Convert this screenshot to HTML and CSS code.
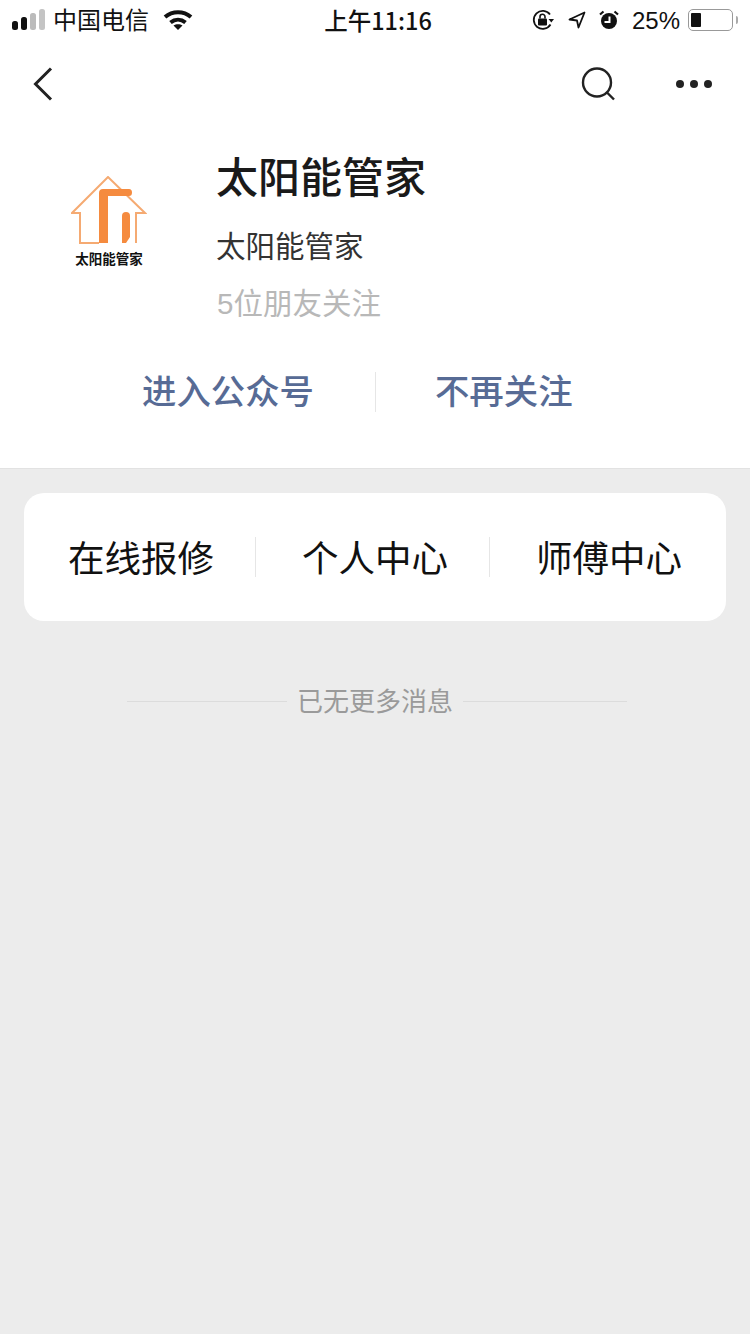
FILE: index.html
```html
<!DOCTYPE html>
<html lang="zh-CN">
<head>
  <meta charset="UTF-8">
  <title>太阳能管家</title>
  <link rel="stylesheet" href="styles.css">
</head>
<body>

  <div class="top">
    <div class="status">
      <div class="status-left">
        <svg class="signal" width="34" height="22" viewBox="0 0 34 22">
          <rect x="0" y="12" width="6" height="9" rx="2.500" fill="#111"/>
          <rect x="9" y="8" width="6" height="13" rx="2.500" fill="#111"/>
          <rect x="18" y="4" width="6" height="17" rx="2.500" fill="#bbb"/>
          <rect x="27" y="0" width="6" height="21" rx="2.500" fill="#c4c4c4"/>
        </svg>
        <span class="carrier">中国电信</span>
        <svg class="wifi" width="30" height="22" viewBox="0 0 30 22">
          <path d="M2 8C9.500 1.500 20.500 1.500 28 8" fill="none" stroke="#111" stroke-width="4"/>
          <path d="M7.500 13.500C12 9.800 18 9.800 22.500 13.500" fill="none" stroke="#111" stroke-width="4"/>
          <path d="M10.500 16.500C13 14.700 17 14.700 19.500 16.500L15 21Z" fill="#111"/>
        </svg>
      </div>
      <div class="clock">上午11:16</div>
      <div class="status-right">
        <svg width="22" height="22" viewBox="0 0 22 22">
          <path d="M18 5.500A9 9 0 1 0 18.500 15.500" fill="none" stroke="#111" stroke-width="1.800"/>
          <path d="M16.500 10h5.500l-2.700 3.500z" fill="#111"/>
          <rect x="6" y="9.500" width="9" height="7" rx="1" fill="#111"/>
          <path d="M8 9.500V7.800a2.500 2.500 0 0 1 5 0v1.700" fill="none" stroke="#111" stroke-width="1.600"/>
        </svg>
        <svg class="gap-loc" width="18" height="18" viewBox="0 0 18 18">
          <path d="M16.500 1.500L1.500 8.500L9 9.500L10.500 16.500Z" fill="none" stroke="#111" stroke-width="1.800" stroke-linejoin="round"/>
        </svg>
        <svg class="gap-alarm" width="20" height="20" viewBox="0 0 20 20">
          <circle cx="10" cy="11" r="8" fill="#111"/>
          <path d="M10.500 6.500V12H5.500" fill="none" stroke="#fff" stroke-width="2"/>
          <path d="M1 4.500L4.500 1.500M19 4.500L15.500 1.500" stroke="#111" stroke-width="2.200"/>
        </svg>
        <span class="percent">25%</span>
        <div class="battery">
          <div class="battery-level"></div>
        </div>
        <div class="battery-tip"></div>
      </div>
    </div>

    <div class="nav">
      <svg width="20" height="34" viewBox="0 0 20 34">
        <path d="M18 1.500L2.500 17L18 32.500" fill="none" stroke="#222" stroke-width="3"/>
      </svg>
      <div class="nav-actions">
        <svg width="34" height="34" viewBox="0 0 34 34">
          <circle cx="16" cy="15.500" r="14" fill="none" stroke="#222" stroke-width="2.400"/>
          <path d="M25.500 25L33 32.500" stroke="#222" stroke-width="2.400"/>
        </svg>
        <div class="dots"><i></i><i></i><i></i></div>
      </div>
    </div>

    <div class="profile">
      <div class="logo">
        <svg width="76" height="70" viewBox="0 0 76 70">
          <path d="M28 67H9V37H1L37 1L74 37H65V67" fill="none" stroke="#f5aa72" stroke-width="2"/>
          <path d="M28 67V17Q28 13 32 13H58Q61 13 61 16.500Q61 20 58 20H37V67Z" fill="#f58b3f"/>
          <path d="M51 67V40Q51 36 55 36Q59 36 59 40V61L55 67Z" fill="#f58b3f"/>
        </svg>
        <span class="logo-text">太阳能管家</span>
      </div>
      <div class="info">
        <h1>太阳能管家</h1>
        <p class="desc">太阳能管家</p>
        <p class="friends">5位朋友关注</p>
      </div>
    </div>

    <div class="actions">
      <a class="action action-enter">进入公众号</a>
      <span class="action-line"></span>
      <a class="action action-quit">不再关注</a>
    </div>
  </div>

  <div class="menu">
    <div class="menu-item">在线报修</div>
    <div class="menu-item">个人中心</div>
    <div class="menu-item">师傅中心</div>
  </div>

  <div class="end-note">
    <span class="end-line"></span>
    <span class="end-text">已无更多消息</span>
    <span class="end-line end-line-right"></span>
  </div>

</body>
</html>
```

FILE: styles.css
```css
html, body {
  margin: 0;
  padding: 0;
}
body {
  width: 750px;
  height: 1334px;
  overflow: hidden;
  background: #ececec;
  font-family: "Liberation Sans", "Noto Sans CJK SC", sans-serif;
  color: #111;
}
.top {
  background: #fff;
  height: 468px;
  border-bottom: 1px solid #e2e2e2;
}

/* status bar */
.status {
  height: 40px;
  display: grid;
  grid-template-columns: 1fr auto 1fr;
  align-items: center;
  padding: 0 12px;
  font-size: 24px;
}
.status-left {
  display: flex;
  align-items: center;
}
.carrier {
  margin-left: 7px;
  padding-bottom: 3px;
}
.wifi {
  margin-left: 14px;
}
.clock {
  margin-left: 6px;
  font-family: "Noto Sans CJK SC", sans-serif;
  font-size: 23.500px;
  font-weight: 500;
  line-height: 36px;
}
.status-right {
  display: flex;
  align-items: center;
  justify-content: flex-end;
}
.gap-loc {
  margin-left: 14px;
}
.gap-alarm {
  margin-left: 13px;
}
.percent {
  margin-left: 13px;
  padding-top: 1px;
  font-size: 24px;
}
.battery {
  margin-left: 8px;
  width: 39px;
  height: 14px;
  border: 1.5px solid #999;
  border-radius: 5px;
  padding: 3px 2px;
  display: flex;
}
.battery-level {
  width: 10px;
  background: #111;
  border-radius: 1px;
}
.battery-tip {
  width: 2px;
  height: 8px;
  margin-left: 3px;
  background: #aaa;
  border-radius: 0 2px 2px 0;
}

/* nav */
.nav {
  height: 88px;
  display: flex;
  align-items: center;
  justify-content: space-between;
  padding: 0 38px 0 33px;
}
.nav-actions {
  display: flex;
  align-items: center;
  gap: 61px;
}
.dots {
  display: flex;
  gap: 6px;
}
.dots i {
  width: 8px;
  height: 8px;
  border-radius: 50%;
  background: #222;
}

/* profile */
.profile {
  display: flex;
  padding: 0 0 0 64px;
  height: 208px;
}
.logo {
  width: 90px;
  padding-top: 48px;
  display: flex;
  flex-direction: column;
  align-items: center;
}
.logo-text {
  margin-top: 5px;
  font-size: 13.500px;
  font-weight: 700;
  line-height: 18px;
  white-space: nowrap;
}
.info {
  margin-left: 62px;
  padding-top: 23px;
}
.info h1 {
  margin: 0;
  font-size: 42px;
  line-height: 56px;
  font-weight: 500;
  color: #1a1a1a;
}
.desc {
  margin: 18px 0 0;
  font-size: 29.500px;
  line-height: 44px;
  color: #333;
}
.friends {
  margin: 13px 0 0 1px;
  font-size: 29.500px;
  line-height: 44px;
  color: #b8b8b8;
}

/* actions */
.actions {
  display: flex;
  align-items: center;
  height: 40px;
  margin-top: 36px;
}
.action {
  font-size: 34.400px;
  font-weight: 500;
  line-height: 40px;
  color: #576b95;
  white-space: nowrap;
}
.action-enter {
  margin-left: 142px;
}
.action-line {
  width: 1px;
  height: 40px;
  margin-left: 61px;
  background: #e6e6e6;
}
.action-quit {
  margin-left: 59px;
}

/* menu card */
.menu {
  display: grid;
  grid-template-columns: repeat(3, 234px);
  height: 128px;
  margin: 24px 24px 0;
  background: #fff;
  border-radius: 20px;
}
.menu-item {
  position: relative;
  display: flex;
  align-items: center;
  justify-content: center;
  padding-bottom: 2px;
  font-size: 36.500px;
  color: #111;
}
.menu-item:not(:last-child)::after {
  content: "";
  position: absolute;
  right: 2px;
  top: 44px;
  width: 1px;
  height: 40px;
  background: #e6e6e6;
}

/* end of list */
.end-note {
  display: flex;
  align-items: center;
  justify-content: center;
  margin-top: 62px;
  padding-left: 4px;
  height: 36px;
}
.end-line {
  width: 160px;
  height: 1px;
  background: #dcdcdc;
}
.end-line-right {
  width: 164px;
}
.end-text {
  margin: 0 10px 0 10px;
  padding-top: 2px;
  font-size: 26px;
  line-height: 36px;
  color: #9a9a9a;
}
```
